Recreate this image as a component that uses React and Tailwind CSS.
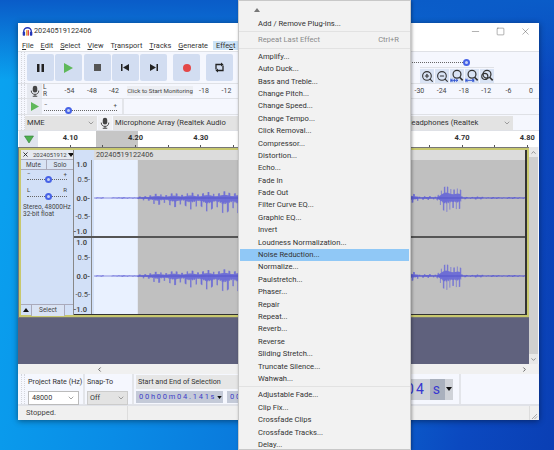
import React from 'react';
import { Minus, Square, X, ChevronDown, ChevronUp, ChevronLeft, ChevronRight, ZoomIn, ZoomOut } from 'lucide-react';

const font = { fontFamily: 'Roboto, "Open Sans", sans-serif' };

const menuGroups = [
  ['Add / Remove Plug-ins...'],
  ['Repeat Last Effect'],
  ['Amplify...', 'Auto Duck...', 'Bass and Treble...', 'Change Pitch...', 'Change Speed...', 'Change Tempo...', 'Click Removal...', 'Compressor...', 'Distortion...', 'Echo...', 'Fade In', 'Fade Out', 'Filter Curve EQ...', 'Graphic EQ...', 'Invert', 'Loudness Normalization...', 'Noise Reduction...', 'Normalize...', 'Paulstretch...', 'Phaser...', 'Repair', 'Repeat...', 'Reverb...', 'Reverse', 'Sliding Stretch...', 'Truncate Silence...', 'Wahwah...'],
  ['Adjustable Fade...', 'Clip Fix...', 'Crossfade Clips', 'Crossfade Tracks...', 'Delay...'],
];

const rulerLabels = ['4.10', '', '4.20', '', '4.30', '', '', '', '', '', '', '', '4.70', '', '4.80'];

function Grip() {
  return <div className="w-[4px] h-full mx-[1px] shrink-0 border-x border-dotted border-[#d4d6dc]" />;
}

function MicIcon({ size = 13 }) {
  return (
    <svg width={size} height={size} viewBox="0 0 16 16">
      <rect x="5" y="1" width="6" height="9" rx="3" fill="#444" />
      <path d="M3 7.5c0 3.2 2 5 5 5s5-1.8 5-5" fill="none" stroke="#444" strokeWidth="1.3" />
      <path d="M8 12.5V15M5 15h6" stroke="#444" strokeWidth="1.3" />
    </svg>
  );
}

function TransportBtn({ children, className = '' }) {
  return <div className={'w-[27px] h-[27px] rounded-[2px] bg-[#d2ddf1] flex items-center justify-center shrink-0 ' + className}>{children}</div>;
}

function ZoomFit({ kind }) {
  return (
    <svg width="14" height="14" viewBox="0 0 16 16" fill="none">
      <circle cx="8" cy="6" r="4.5" stroke="#333" strokeWidth="1.4" />
      <path d="M11 9.5l3.5 3.5" stroke="#333" strokeWidth="1.8" />
      {kind === 'sel' && <path d="M1 13h8M1 11v4M3 11.5l-2 1.5 2 1.5M7 11.5l2 1.5-2 1.5M5 11v4" stroke="#2b4fd0" strokeWidth="1" />}
      {kind === 'fit' && <path d="M1 13h9M1 11v4M10 11v4M3 11.5l-2 1.5 2 1.5M8 11.5l2 1.5-2 1.5" stroke="#2b4fd0" strokeWidth="1" />}
      {kind === 'toggle' && <circle cx="5.5" cy="8.5" r="3.5" stroke="#333" strokeWidth="1.3" />}
    </svg>
  );
}

function envelope(x) {
  if (x < 138) return [0.6, 0.6];
  if (x < 150) return [1 + (x - 138) * 0.2, 1 + (x - 138) * 0.3];
  if (x < 300) return [4 + (x - 150) * 0.035, 6 + (x - 150) * 0.13];
  if (x < 420) return [7 - (x - 300) * 0.02, 14 - (x - 300) * 0.08];
  if (x < 438) return [2, 2];
  if (x < 463) {
    const b = 2 + 12 * Math.sin(((x - 438) / 25) * Math.PI * 0.85);
    return [b, b * 1.2];
  }
  if (x < 485) return [1.5, 1.5];
  return [1, 1];
}

function wavePath() {
  let d = '';
  for (let x = 94; x < 527; x += 0.5) {
    if (x < 117 && Math.floor(x / 8) % 2 === 1) continue;
    const [up, down] = envelope(x);
    const period = x > 438 && x < 463 ? 3.2 : 5.3;
    const phase = (x % period) / period;
    const spike = phase < 0.22 ? 1 : 0.25 + 0.15 * Math.abs(Math.sin(x * 1.7));
    const spikeUp = phase > 0.3 && phase < 0.55 ? 1 : 0.45;
    const jitter = 0.8 + 0.2 * Math.sin(x * 0.37);
    d += 'M' + (x - 94) + ' ' + (38 - up * spikeUp * jitter).toFixed(1);
    d += 'V' + (38 + down * spike * jitter).toFixed(1);
  }
  return d;
}

function Channel() {
  return (
    <div className="flex h-[76px]">
      <div className="w-[18px] mr-[2px] bg-[#d2e0f7] border-r border-[#888] flex flex-col justify-between items-end pr-[1px] text-[7.5px] leading-[9px] text-[#444] font-semibold shrink-0">
        <span className="mr-[3px]">1.0</span>
        <span className="mb-[4px] font-normal">0.5-</span>
        <span>0.0-</span>
        <span className="mt-[4px] font-normal">-0.5-</span>
        <span className="mr-[3px]">-1.0</span>
      </div>
      <svg className="flex-1 h-full" viewBox="0 0 433 76" preserveAspectRatio="none">
        <rect width="433" height="76" fill="#c0c0c0" />
        <rect width="44" height="76" fill="#e9f1ff" />
        <path d={wavePath()} stroke="#5a5adc" strokeWidth="0.6" fill="none" />
        <path d="M0 38H433" stroke="#4343c8" strokeWidth="0.8" opacity="0.7" />
      </svg>
    </div>
  );
}

function Hslider({ thumb }) {
  return (
    <div className="relative h-[4px] w-full border-b border-dotted border-[#666]">
      <span className={'absolute top-0 w-[7px] h-[7px] rounded-full border-2 border-[#4763e6] bg-[#c7d2f7] ' + thumb} />
    </div>
  );
}

function Window() {
  return (
    <div className="absolute left-[18px] top-[23px] w-[521px] h-[397px] bg-[#f5f7fe] flex flex-col text-[7.6px] text-[#333] shadow-[0_1px_6px_rgba(0,0,0,0.45)]" style={font}>
      {/* title */}
      <div className="h-[17px] bg-white flex items-center pl-[4px] text-[#333] text-[7.3px] shrink-0">
        <svg width="11" height="11" viewBox="0 0 16 16" className="mr-[1px]">
          <path d="M2.5 11V8a5.5 5.5 0 0 1 11 0v3" fill="none" stroke="#2436b8" strokeWidth="2" />
          <rect x="1" y="8.5" width="3.5" height="5.5" rx="1" fill="#2436b8" />
          <rect x="11.5" y="8.5" width="3.5" height="5.5" rx="1" fill="#2436b8" />
          <rect x="6" y="6" width="1.8" height="8" fill="#e8a020" />
          <rect x="8.2" y="6" width="1.8" height="8" fill="#d8282c" />
        </svg>
        20240519122406
        <div className="ml-auto flex items-center gap-[15px] pr-[8px] text-[#555]">
          <Minus size={11} strokeWidth={1} />
          <Square size={9} strokeWidth={1.2} />
          <X size={11} strokeWidth={1} />
        </div>
      </div>

      {/* menu bar */}
      <div className="h-[11px] bg-white flex items-center pl-[4px] gap-[7px] leading-none shrink-0 text-[7.4px]">
        <span><u>F</u>ile</span>
        <span><u>E</u>dit</span>
        <span><u>S</u>elect</span>
        <span><u>V</u>iew</span>
        <span>T<u>r</u>ansport</span>
        <span><u>T</u>racks</span>
        <span><u>G</u>enerate</span>
        <span className="bg-[#cce4f7] px-[3px] -ml-[2px] -my-[1px] py-[1px]">Effe<u>c</u>t</span>
      </div>

      {/* transport toolbar */}
      <div className="h-[32px] flex items-center border-t border-[#dfe1e6] pl-[2px] shrink-0">
        <Grip />
        <div className="flex gap-[1.3px] ml-[1px]">
          <TransportBtn>
            <svg width="9" height="10" viewBox="0 0 9 10"><path d="M1 1h2.5v8H1zM5.5 1H8v8H5.5z" fill="#222" /></svg>
          </TransportBtn>
          <TransportBtn>
            <svg width="11" height="12" viewBox="0 0 11 12"><path d="M1 1l9 5-9 5z" fill="#5fb85a" /></svg>
          </TransportBtn>
          <TransportBtn>
            <svg width="9" height="9" viewBox="0 0 9 9"><rect x="1" y="1" width="7" height="7" fill="#555" /></svg>
          </TransportBtn>
          <TransportBtn>
            <svg width="10" height="9" viewBox="0 0 10 9"><path d="M1 1h1.5v7H1zM9 1v7L3 4.5z" fill="#222" /></svg>
          </TransportBtn>
          <TransportBtn>
            <svg width="10" height="9" viewBox="0 0 10 9"><path d="M7.5 1H9v7H7.5zM1 1v7l6-3.5z" fill="#222" /></svg>
          </TransportBtn>
        </div>
        <TransportBtn className="ml-[6px]">
          <svg width="10" height="10" viewBox="0 0 10 10"><circle cx="5" cy="5" r="4" fill="#e44848" /></svg>
        </TransportBtn>
        <TransportBtn className="ml-[6px]">
          <svg width="11" height="11" viewBox="0 0 11 11" fill="none"><path d="M2 7.5V2.5h5.5M9 3.5v5H3.5" stroke="#222" strokeWidth="1.3" /><path d="M7 0.5v4l2.5-2zM4 6.5v4l-2.5-2z" fill="#222" /></svg>
        </TransportBtn>
        <div className="ml-auto flex flex-col h-full pr-[45px] items-end">
          <div className="h-[16px] flex items-center pr-[27px]">
            <div className="relative w-[60px] h-[6px] border-b border-dotted border-[#666]">
              <span className="absolute right-[-3px] top-[2px] w-[7px] h-[7px] rounded-full border-2 border-[#4763e6] bg-[#c7d2f7]" />
            </div>
          </div>
          <div className="flex gap-[1px] border-t border-[#dfe1e6] pt-[1px]">
            <div className="w-[14px] h-[14px] bg-[#d9e3f4] flex items-center justify-center"><ZoomIn size={13} color="#333" /></div>
            <div className="w-[14px] h-[14px] bg-[#d9e3f4] flex items-center justify-center"><ZoomOut size={13} color="#333" /></div>
            <div className="w-[14px] h-[14px] bg-[#d9e3f4] flex items-center justify-center"><ZoomFit kind="sel" /></div>
            <div className="w-[14px] h-[14px] bg-[#d9e3f4] flex items-center justify-center"><ZoomFit kind="fit" /></div>
            <div className="w-[14px] h-[14px] bg-[#d9e3f4] flex items-center justify-center"><ZoomFit kind="toggle" /></div>
          </div>
        </div>
      </div>

      {/* meter */}
      <div className="h-[15px] flex items-center border-t border-[#dfe1e6] pl-[2px] text-[7px] text-[#444] shrink-0">
        <Grip />
        <div className="w-[15px] h-[14px] ml-[1px] bg-[#e6e9f0] flex items-center justify-center shrink-0"><MicIcon size={12} /></div>
        <div className="w-[6px] ml-[1px] flex flex-col leading-[7px] text-[6.5px]"><span>L</span><span>R</span></div>
        <div className="flex items-center pl-[9px]">
          <span className="w-[23px] text-center">-54</span>
          <span className="w-[22px] text-center">-48</span>
          <span className="w-[22px] text-center">-42</span>
          <span className="ml-[2px] w-[66px] text-center bg-[#eceef3] whitespace-nowrap text-[6.1px] leading-[10px]">Click to Start Monitoring</span>
          <span className="w-[22px] text-center">-18</span>
          <span className="w-[23px] text-center">-12</span>
        </div>
        <div className="ml-auto flex -mr-[3px]">
          {['-30', '-24', '-18', '-12', '-6', '0'].map((t, i) => <span key={i} className="w-[22.3px] text-center">{t}</span>)}
        </div>
      </div>

      {/* play at speed */}
      <div className="h-[16px] flex items-center border-t border-[#dfe1e6] pl-[2px] shrink-0">
        <Grip />
        <div className="w-[15px] h-[15px] ml-[1px] bg-[#e6e9f0] flex items-center justify-center shrink-0">
          <svg width="10" height="11" viewBox="0 0 10 11"><path d="M1 1l8 4.5-8 4.5z" fill="#5fb85a" /></svg>
        </div>
        <div className="ml-[2px] w-[80px] flex flex-col justify-center h-full border-r-2 border-[#e3e5ea] pr-[5px] text-[6px] leading-[5px] text-[#444]">
          <div className="flex justify-between"><span>−</span><span>+</span></div>
          <Hslider thumb="left-[21px]" />
        </div>
      </div>

      {/* device */}
      <div className="h-[16px] flex items-center border-t border-[#dfe1e6] pl-[2px] shrink-0">
        <Grip />
        <div className="w-[72px] h-[14px] -ml-[1px] bg-[#e3e3e3] flex items-center justify-between px-[2px] shrink-0">MME<ChevronDown size={8} color="#777" /></div>
        <div className="w-[14px] h-[14px] ml-[1px] bg-[#f0f1f4] flex items-center justify-center shrink-0"><MicIcon size={12} /></div>
        <div className="w-[125px] h-[14px] ml-[1px] bg-[#e3e3e3] px-[2px] whitespace-nowrap overflow-hidden leading-[14px] shrink-0">Microphone Array (Realtek Audio</div>
        <div className="ml-auto mr-[26px] w-[120px] h-[14px] bg-[#e3e3e3] flex items-center justify-between pl-[13px] pr-[2px] whitespace-nowrap">Headphones (Realtek<ChevronDown size={8} color="#777" /></div>
      </div>

      {/* time ruler */}
      <div className="h-[17px] flex border-t border-[#dfe1e6] bg-white shrink-0">
        <div className="w-[19px] ml-[1px] bg-[#e0e4ee] flex items-center justify-center shrink-0">
          <svg width="10" height="9" viewBox="0 0 10 9"><path d="M0.5 1h9L5 8z" fill="#4eb04e" stroke="#2f7d3a" strokeWidth="0.6" /></svg>
        </div>
        <div className="flex flex-1 font-bold text-[7.5px] text-[#333] relative overflow-hidden">
          <div className="absolute left-[58px] w-[42px] h-full bg-[#c6c6c6]" />
          <div className="relative flex w-full pl-[16px]">
            {rulerLabels.map((t, i) => (
              <div key={i} className="w-[32.65px] shrink-0 flex flex-col items-center justify-between h-full">
                <span className="pt-[1px] leading-[11px] h-[12px]">{t}</span>
                <span className="w-px h-[2px] bg-[#555]" />
              </div>
            ))}
          </div>
        </div>
      </div>

      {/* tracks */}
      <div className="flex flex-1 min-h-0">
        <div className="flex-1 bg-[#5f617d] min-w-0">
          <div className="h-[169px] mt-[1px] border-2 border-[#c8c86e] outline outline-1 outline-[#777] ml-px bg-[#d2e0f7] flex">
            <div className="w-[53px] shrink-0 flex flex-col border-r border-[#888] text-[6.5px] text-[#444]">
              <div className="h-[10px] flex items-center bg-[#e6e9f0] border-b border-[#aab] px-[1px] whitespace-nowrap overflow-hidden text-[6px]">
                <X size={7} strokeWidth={3} color="#222" className="shrink-0" />
                <span className="ml-[4px]">2024051912</span>
                <svg width="6" height="4" viewBox="0 0 6 4" className="shrink-0 ml-[1px]"><path d="M0 0h6L3 4z" fill="#111" /></svg>
              </div>
              <div className="h-[10px] flex bg-[#d9e3f4] border-b border-[#aab] text-center leading-[10px]">
                <span className="w-1/2 border-r border-[#aab]">Mute</span>
                <span className="w-1/2">Solo</span>
              </div>
              <div className="px-[6px] flex justify-between leading-[7px] text-[6px]"><span>−</span><span>+</span></div>
              <div className="px-[6px] -mt-[1px]"><Hslider thumb="left-[18px]" /></div>
              <div className="px-[6px] pt-[6px] flex justify-between leading-[7px] text-[6px]"><span>L</span><span>R</span></div>
              <div className="px-[6px]"><Hslider thumb="left-[18px]" /></div>
              <div className="pl-[2px] pt-[7px] leading-[7px] text-[#444] whitespace-nowrap">Stereo, 48000Hz<br />32-bit float</div>
              <div className="mt-auto h-[11px] flex items-center border-t border-[#aab]">
                <div className="w-[10px] flex justify-center">
                  <svg width="6" height="4" viewBox="0 0 6 4"><path d="M3 0l3 4H0z" fill="#111" /></svg>
                </div>
                <div className="w-[34px] text-center bg-[#d9e3f4] leading-[11px] border-x border-[#aab]">Select</div>
              </div>
            </div>
            <div className="flex-1 min-w-0 border-r-2 border-b border-[#333] flex flex-col">
              <div className="h-[10px] ml-[20px] bg-[#dcdcdc] text-[7.3px] leading-[10px] text-[#444] pl-[2px]">20240519122406</div>
              <Channel />
              <div className="h-[2px] bg-[#555]" />
              <Channel />
            </div>
          </div>
        </div>
        <div className="w-[9px] bg-[#cfcfcf] mr-[1px] flex flex-col items-center justify-between shrink-0">
          <div className="w-full h-[10px] bg-[#e8e8e8] flex justify-center items-center"><ChevronUp size={7} color="#555" /></div>
          <div className="w-full h-[10px] bg-[#e8e8e8] flex justify-center items-center"><ChevronDown size={7} color="#555" /></div>
        </div>
      </div>

      {/* hscroll */}
      <div className="h-[10px] bg-[#f0f0f0] flex items-center justify-between pl-[78px] pr-[11px] shrink-0">
        <ChevronLeft size={7} strokeWidth={3} color="#555" />
        <ChevronRight size={7} strokeWidth={3} color="#555" />
      </div>

      {/* selection bar */}
      <div className="h-[32px] flex pl-[2px] border-b-2 border-[#e0e2e8] shrink-0 text-[7.2px]">
        <Grip />
        <div className="w-[55px] pl-[2px] pt-[1px]">
          <div className="whitespace-nowrap leading-[13px]">Project Rate (Hz)</div>
          <div className="mt-[3px] h-[14px] w-[51px] bg-white border border-[#bbb] flex justify-between items-center px-[3px]">48000<ChevronDown size={8} color="#777" /></div>
        </div>
        <div className="w-[49px] pl-[2px] pt-[1px] border-l-2 border-[#e3e5ea] ml-[2px]">
          <div className="leading-[13px]">Snap-To</div>
          <div className="mt-[3px] h-[14px] w-[41px] bg-[#e3e3e3] border border-[#ccc] flex justify-between items-center px-[2px]">Off<ChevronDown size={8} color="#777" /></div>
        </div>
        <div className="border-l-2 border-[#e3e5ea] pl-[2px] w-[200px] pt-[1px]">
          <div className="bg-[#e6e6e6] leading-[14px] pl-[2px]">Start and End of Selection</div>
          <div className="mt-[2px] flex">
            <div className="h-[12px] w-[87px] bg-[#c4cad8] text-[#3d3dc8] text-[7.5px] leading-[12px] tracking-[1.75px] pl-[3px] whitespace-nowrap flex items-center">
              00h00m04.141s
              <svg width="5" height="3" viewBox="0 0 6 4" className="ml-auto mr-[1px]"><path d="M0 0h6L3 4z" fill="#111" /></svg>
            </div>
            <div className="h-[12px] ml-[4px] w-[60px] bg-[#c4cad8] text-[#3d3dc8] text-[7.5px] leading-[12px] tracking-[1.75px] pl-[3px]">00h</div>
          </div>
        </div>
        <div className="ml-auto flex items-center h-full border-r-2 border-[#e3e5ea] pr-[6px] mr-[78px]">
          <div className="h-[21px] bg-[#cfd2d8] flex items-center text-[#3838d0] text-[14px] tracking-[2px] whitespace-nowrap">
            <span className="pl-[2px]">04</span><span className="ml-[4px] bg-[#a9b0bd] px-[3px] leading-[21px]">s</span>
            <svg width="6" height="4" viewBox="0 0 6 4" className="mx-[1px]"><path d="M0 0h6L3 4z" fill="#111" /></svg>
          </div>
        </div>
      </div>

      {/* status */}
      <div className="h-[14px] flex items-center bg-[#f0f0f0] text-[7.6px] text-[#444] shrink-0">
        <div className="w-[110px] pl-[8px] h-full leading-[14px] border-r border-[#ddd]">Stopped.</div>
        <div className="ml-auto w-[9px] mr-[1px] h-full border-l border-[#ddd] flex items-end justify-end">
          <svg width="7" height="7" viewBox="0 0 7 7"><path d="M6 1L1 6M6 3.5L3.5 6" stroke="#aaa" /></svg>
        </div>
      </div>
    </div>
  );
}

function Menu() {
  return (
    <div className="absolute left-[238px] top-0 w-[173px] h-[450px] overflow-hidden bg-[#f2f2f2] border border-[#c8c8c8] flex flex-col text-[7.6px] text-[#333] shadow-[1px_1px_3px_rgba(0,0,0,0.35)]" style={font}>
      <div className="h-[17px] pl-[15px] pt-[7px] shrink-0">
        <svg width="6" height="4" viewBox="0 0 6 4"><path d="M3 0l3 4H0z" fill="#777" /></svg>
      </div>
      {menuGroups.map((group, g) => (
        <div key={g} className={'shrink-0 ' + (g > 0 ? 'border-t border-[#e2e2e2] mt-[1px] pt-[2px]' : '')}>
          {group.map((item) => {
            const selected = item === 'Noise Reduction...';
            const disabled = item === 'Repeat Last Effect';
            return (
              <div
                key={item}
                className={
                  'h-[12.4px] mx-[1px] pl-[18px] pr-[10px] leading-[12.4px] flex justify-between whitespace-nowrap ' +
                  (selected ? 'bg-[#90c8f6]' : '') +
                  (disabled ? ' text-[#8a8a8a]' : '')
                }
              >
                <span>{item}</span>
                {disabled && <span>Ctrl+R</span>}
              </div>
            );
          })}
        </div>
      ))}
    </div>
  );
}

export default function App() {
  return (
    <div className="relative w-[554px] h-[450px] overflow-hidden bg-[linear-gradient(100deg,#0aa4f0_0%,#0a8ce6_30%,#0a6fd6_62%,#0b49c0_85%,#0a3fb4_100%)]">
      <div className="absolute inset-x-0 top-0 h-[80px] bg-gradient-to-b from-[#0a5cc8] to-transparent" />
      <Window />
      <Menu />
    </div>
  );
}
